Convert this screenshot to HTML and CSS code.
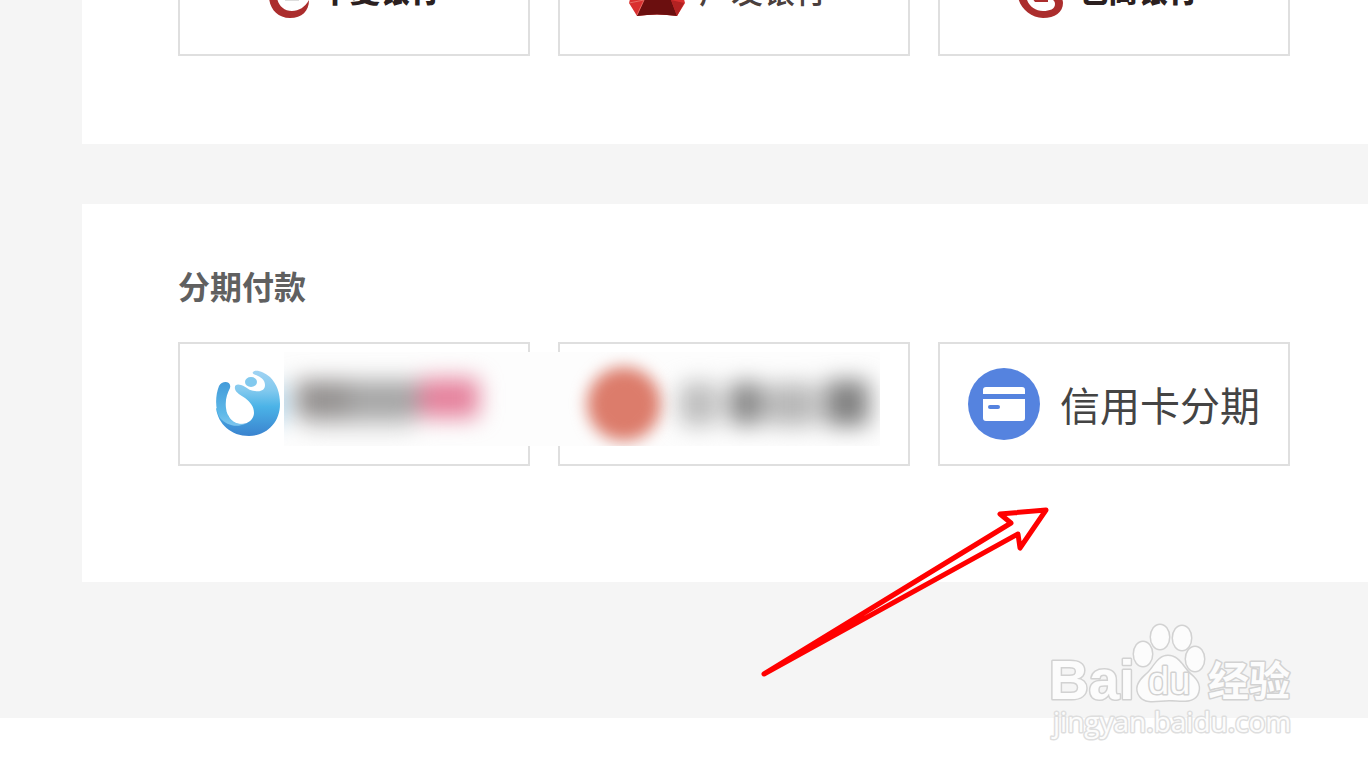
FILE: index.html
```html
<!DOCTYPE html>
<html lang="zh-CN">
<head>
<meta charset="utf-8">
<title>分期付款</title>
<link rel="stylesheet" href="styles.css">
</head>
<body>
<main class="page">
  <section class="panel panel-banks">
    <div class="cards cards-cut">
      <a class="card bank" href="#huaxia">
        <svg class="bank-logo" width="44" height="44" viewBox="0 0 44 44" aria-hidden="true"><path d="M22 0C9 0 1 10 1 22s8 22 21 22c12 0 19-7 19-18-4 7-10 11-17 11C15 37 9 30 9 22S12 6 22 0z" fill="#ab2d2d"/><path d="M17 24h14v3H17z" fill="#ddd"/></svg>
        <span class="bank-name heavy">华夏银行</span>
      </a>
      <a class="card bank bank-wide" href="#guangfa">
        <svg class="bank-logo" width="56" height="46" viewBox="0 0 56 46" aria-hidden="true"><path d="M8 0h40l8 31-8 13q-20-3-40 0L0 31z" fill="#d92f2f"/><path d="M15 28h27l6 16q-20-3-40 0z" fill="#6b0f0f"/><path d="M42 28l13 3-7 13z" fill="#b22222"/><path d="M0 31l15-3-7 15" fill="none" stroke="#e56a62"/></svg>
        <span class="bank-name light">广发银行</span>
      </a>
      <a class="card bank bank-wide" href="#baoshang">
        <svg class="bank-logo" width="46" height="44" viewBox="0 0 46 44" aria-hidden="true"><path d="M22 0C8 0 0 10 0 21s12 23 25 23c12 0 20-6 20-15 0-6-5-8-12-8l-10 1v3c9-1 14 0 14 5s-5 7-12 7C16 37 8 30 8 20S14 5 22 0z" fill="#ab2d2d"/><path d="M14 24h16v4H17z" fill="#ab2d2d"/></svg>
        <span class="bank-name heavy">包商银行</span>
      </a>
    </div>
  </section>

  <section class="panel panel-split">
    <h2 class="heading">分期付款</h2>
    <div class="cards">
      <a class="card" href="#installment" aria-label="分期">
        <svg class="swirl" width="64" height="68" viewBox="0 0 64 68" aria-hidden="true"><defs><linearGradient id="sky" x1="0" y1="0" x2="0" y2="1"><stop offset="0" stop-color="#a0d3f3"/><stop offset=".3" stop-color="#82c9ee"/><stop offset=".55" stop-color="#4bb3e7"/><stop offset="1" stop-color="#3a83cf"/></linearGradient><linearGradient id="arm" x1="0" y1="0" x2="0" y2="1"><stop offset="0" stop-color="#439bd9"/><stop offset=".7" stop-color="#5db8e8"/><stop offset="1" stop-color="#7cc5ee"/></linearGradient></defs>
          <path d="M37 2C40-1 48 2 54 7c7 7 10 16 10 27 0 19-14 32-31 32C15 66 2 54 0 38l12 7c2 5 6 9 11 9 9 1 15-5 15-11 0-7-4-11-9-15-4-3-9-5-10-9-1-5 3-5 6-4 6 2 8 6 14 6 6 1 10-1 10-6 0-6-5-8-9-10-3-1-4-2-3-3z" fill="url(#sky)"/>
          <path d="M14 18C11 24 9 30 10 38c1 10 8 17 19 16-9 4-19 1-25-6C-1 40-1 26 3 16c3-6 13-5 11 2z" fill="url(#arm)"/>
          <ellipse cx="35" cy="12" rx="6" ry="5" fill="#82c9ee"/></svg>
      </a>
      <a class="card" href="#xiaomi" aria-label="小米分期"></a>
      <a class="card credit" href="#credit">
        <svg width="72" height="72" viewBox="0 0 72 72" aria-hidden="true"><circle cx="36" cy="36" r="36" fill="#5583df"/><path d="M18 19h36q3 0 3 3v4H15v-4q0-3 3-3zM15 31h42v19q0 3-3 3H18q-3 0-3-3z" fill="#fff"/><rect x="20" y="37" width="12" height="4" rx="2" fill="#5583df"/></svg>
        <span class="credit-name">信用卡分期</span>
      </a>
      <svg class="smudge" width="596" height="94" viewBox="0 0 596 94" aria-hidden="true">
        <defs><filter id="soft" filterUnits="userSpaceOnUse" x="-60" y="-60" width="716" height="214" color-interpolation-filters="sRGB"><feGaussianBlur stdDeviation="11"/></filter><filter id="edge" filterUnits="userSpaceOnUse" x="240" y="-60" width="200" height="214" color-interpolation-filters="sRGB"><feGaussianBlur stdDeviation="8"/></filter></defs>
        <rect width="596" height="94" fill="#fdfdfd"/>
        <g filter="url(#soft)">
          <ellipse cx="-9" cy="52" rx="8" ry="22" fill="#8dcaed"/>
          <rect x="12" y="28" width="52" height="38" fill="#959291"/>
          <rect x="64" y="28" width="71" height="38" fill="#a6a6a6"/>
          <rect x="20" y="66" width="110" height="12" fill="#ddd"/>
          <rect x="135" y="26" width="60" height="40" rx="6" fill="#e5829d"/>
        </g>
        <circle cx="340" cy="52" r="37" fill="#dc7c6b" filter="url(#edge)"/>
        <g filter="url(#soft)">
          <rect x="395" y="30" width="40" height="44" rx="10" fill="#bebebe"/>
          <rect x="445" y="30" width="34" height="43" rx="8" fill="#8a8a8a"/>
          <rect x="482" y="31" width="52" height="43" rx="8" fill="#b8b8b8"/>
          <rect x="541" y="28" width="44" height="46" rx="6" fill="#828282"/>
        </g>
      </svg>
    </div>
  </section>
</main>

<svg class="arrow" width="292" height="174" viewBox="0 0 292 174" aria-hidden="true"><path d="M4 170L251 19 240 10 286 6 260 44 258 30z" fill="none" stroke="#f00" stroke-width="5" stroke-linejoin="round"/></svg>

<svg class="watermark" width="260" height="130" viewBox="0 0 260 130" role="img" aria-label="Baidu 经验">
  <g class="mark">
    <text class="mark-bai" x="9" y="79">Bai</text>
    <ellipse cx="103" cy="34" rx="9" ry="12"/><ellipse cx="120" cy="17" rx="9" ry="12"/><ellipse cx="142" cy="18" rx="9" ry="12"/><ellipse cx="155" cy="39" rx="9" ry="12"/>
    <path d="M128 36c-11 0-14 13-22 19-8 7-11 14-6 21 6 8 18 4 29 4 11 0 23 3 28-5 4-8 1-14-6-20-8-7-12-19-23-19z"/>
    <text class="mark-du" x="108" y="74">du</text>
    <text class="mark-cn" x="168" y="76">经验</text>
    <text class="mark-url" x="13" y="112">jingyan.baidu.com</text>
  </g>
</svg>
</body>
</html>
```
FILE: styles.css
```css
* { box-sizing: border-box; }

body {
  position: relative;
  min-height: 100vh;
  margin: 0;
  background: #fff;
  font-family: "Liberation Sans", "Noto Sans CJK SC", sans-serif;
}

.page {
  display: flex;
  flex-direction: column;
  gap: 60px;
  padding: 0 0 136px 82px;
  background: #f5f5f5;
}

.panel {
  padding: 0 78px 0 96px;
  background: #fff;
}

.panel-banks { padding-bottom: 88px; }
.panel-split { padding-top: 60px; padding-bottom: 116px; }

.heading {
  margin: 0 0 30px;
  color: #606060;
  font-size: 32px;
  line-height: 48px;
}

.cards {
  position: relative;
  display: grid;
  grid-template-columns: repeat(3, minmax(0, 352px));
  gap: 28px;
}

.cards-cut {
  height: 56px;
  align-content: end;
  overflow: hidden;
}

.card {
  display: flex;
  align-items: center;
  height: 124px;
  padding: 0 28px;
  border: 2px solid #dfdfdf;
  background: #fff;
  color: #444;
  text-decoration: none;
}

.bank {
  align-items: flex-end;
  justify-content: center;
  gap: 8px;
  padding-bottom: 36px;
}

.bank-wide {
  gap: 14px;
  padding-right: 40px;
}

.bank-logo { flex: none; }

.bank-name {
  margin-bottom: 6px;
  font-size: 30px;
  line-height: 40px;
  white-space: nowrap;
}

.heavy { color: #2b2020; font-weight: 900; }
.light { color: #4b403d; font-size: 32px; font-weight: 500; }

.swirl { margin-left: 8px; }

.credit { gap: 20px; }

.credit-name {
  padding-top: 6px;
  font-size: 40px;
  line-height: 60px;
  white-space: nowrap;
}

.smudge {
  position: absolute;
  left: 106px;
  top: 10px;
}

.arrow {
  position: absolute;
  left: 760px;
  top: 504px;
}

.watermark {
  position: absolute;
  left: 1040px;
  top: 620px;
}

.mark {
  fill: #fcfcfc;
  stroke: #d2d2d2;
  stroke-width: 3px;
  stroke-linejoin: round;
  paint-order: stroke;
}

.mark-bai { font: bold 55px "Liberation Sans", sans-serif; }
.mark-du { font: 38px "Liberation Sans", sans-serif; }
.mark-cn { font: bold 41px "Noto Sans CJK SC", sans-serif; }
.mark-url { font: 28px "Open Sans", sans-serif; stroke: #dedede; }
```
